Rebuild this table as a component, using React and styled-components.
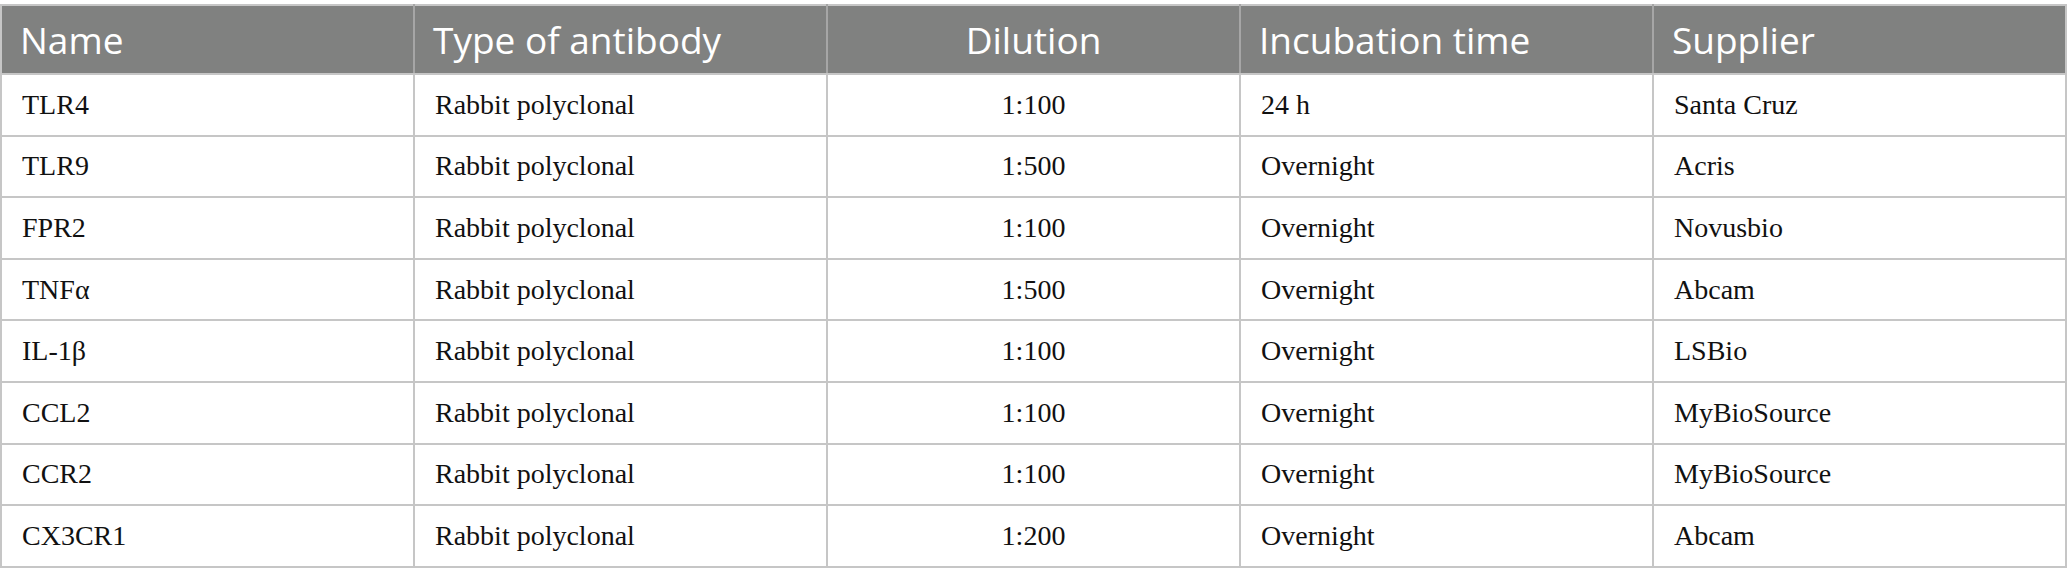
import React from 'react';
import styled, { createGlobalStyle } from 'styled-components';

const GlobalStyle = createGlobalStyle`
  html, body {
    margin: 0;
    padding: 0;
    background: #ffffff;
  }
`;

const Page = styled.div`
  padding-top: 4px;
  width: 2067px;
`;

const Table = styled.table`
  width: 2067px;
  border-collapse: collapse;
  table-layout: fixed;
  border: 2px solid #c6c6c6;
`;

const HeadRow = styled.tr`
  height: 69px;
  background: #808180;
`;

const HeadCell = styled.th`
  font-family: "Open Sans", "Noto Sans", sans-serif;
  font-size: 37px;
  font-weight: 400;
  color: #ffffff;
  text-align: ${p => p.$align || 'left'};
  padding: 0 18px;
  border-left: 2px solid #a6a6a6;
  border-bottom: 2px solid #c6c6c6;
  vertical-align: middle;
  &:first-child {
    border-left: none;
  }
`;

const Row = styled.tr`
  height: 61.6px;
`;

const Cell = styled.td`
  font-family: "Liberation Serif", "Times New Roman", serif;
  font-size: 28px;
  color: #111111;
  text-align: ${p => p.$align || 'left'};
  padding: 0 20px;
  border: 2px solid #c6c6c6;
  vertical-align: middle;
`;

const columns = [
  { label: 'Name' },
  { label: 'Type of antibody' },
  { label: 'Dilution', align: 'center' },
  { label: 'Incubation time' },
  { label: 'Supplier' },
];

const rows = [
  ['TLR4', 'Rabbit polyclonal', '1:100', '24 h', 'Santa Cruz'],
  ['TLR9', 'Rabbit polyclonal', '1:500', 'Overnight', 'Acris'],
  ['FPR2', 'Rabbit polyclonal', '1:100', 'Overnight', 'Novusbio'],
  ['TNFα', 'Rabbit polyclonal', '1:500', 'Overnight', 'Abcam'],
  ['IL-1β', 'Rabbit polyclonal', '1:100', 'Overnight', 'LSBio'],
  ['CCL2', 'Rabbit polyclonal', '1:100', 'Overnight', 'MyBioSource'],
  ['CCR2', 'Rabbit polyclonal', '1:100', 'Overnight', 'MyBioSource'],
  ['CX3CR1', 'Rabbit polyclonal', '1:200', 'Overnight', 'Abcam'],
];

export default function App() {
  return (
    <Page>
      <GlobalStyle />
      <Table>
        <thead>
          <HeadRow>
            {columns.map(c => (
              <HeadCell key={c.label} $align={c.align}>{c.label}</HeadCell>
            ))}
          </HeadRow>
        </thead>
        <tbody>
          {rows.map(r => (
            <Row key={r[0]}>
              {r.map((v, i) => (
                <Cell key={i} $align={columns[i].align}>{v}</Cell>
              ))}
            </Row>
          ))}
        </tbody>
      </Table>
    </Page>
  );
}
